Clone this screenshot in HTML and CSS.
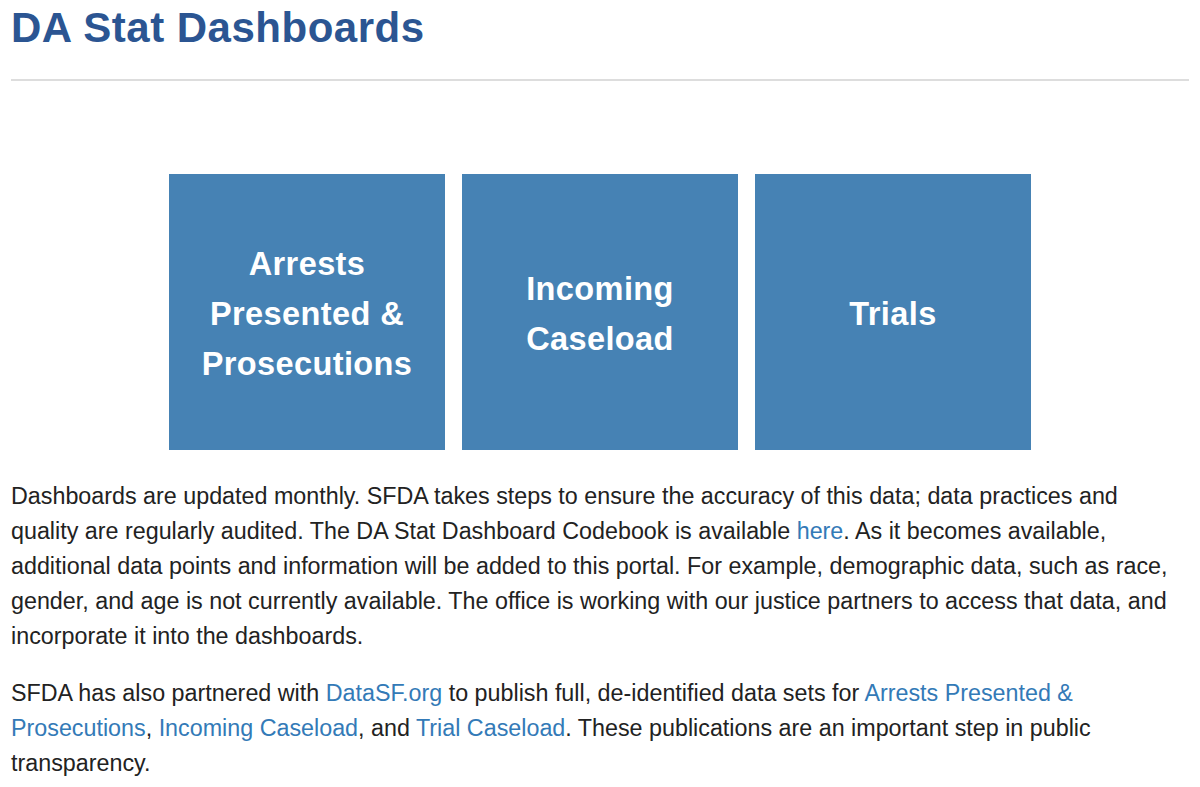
FILE: index.html
```html
<!DOCTYPE html>
<html lang="en">
<head>
<meta charset="utf-8">
<title>DA Stat Dashboards</title>
<link rel="stylesheet" href="styles.css">
</head>
<body>
<main class="page">
  <h1 class="title">DA Stat Dashboards</h1>
  <hr class="rule">
  <div class="tiles">
    <a class="tile" href="#">Arrests<br>Presented &amp;<br>Prosecutions</a>
    <a class="tile" href="#">Incoming<br>Caseload</a>
    <a class="tile" href="#">Trials</a>
  </div>
  <p class="text">Dashboards are updated monthly. SFDA takes steps to ensure the accuracy of this data; data practices and quality are regularly audited. The DA Stat Dashboard Codebook is available <a href="#">here</a>. As it becomes available, additional data points and information will be added to this portal. For example, demographic data, such as race, gender, and age is not currently available. The office is working with our justice partners to access that data, and incorporate it into the dashboards.</p>
  <p class="text">SFDA has also partnered with <a href="#">DataSF.org</a> to publish full, de-identified data sets for <a href="#">Arrests Presented &amp; Prosecutions</a>, <a href="#">Incoming Caseload</a>, and <a href="#">Trial Caseload</a>. These publications are an important step in public transparency.</p>
</main>
</body>
</html>
```
FILE: styles.css
```css
html, body {
  margin: 0;
  padding: 0;
  background: #fff;
}
body {
  font-family: "Liberation Sans", Arial, sans-serif;
  color: #222;
}
.page {
  padding: 0 11px;
}
.title {
  margin: 0;
  padding-top: 5px;
  font-size: 42px;
  line-height: 46px;
  font-weight: bold;
  letter-spacing: 0.5px;
  color: #2b5592;
}
.rule {
  margin: 28px 0 0;
  border: 0;
  border-top: 2px solid #dddddd;
  height: 0;
}
.tiles {
  display: flex;
  justify-content: center;
  gap: 17px;
  margin-top: 93px;
}
.tile {
  box-sizing: border-box;
  width: 276px;
  height: 276px;
  padding-top: 3px;
  background: #4682b4;
  color: #fff;
  text-decoration: none;
  display: flex;
  align-items: center;
  justify-content: center;
  text-align: center;
  font-weight: bold;
  font-size: 32.5px;
  line-height: 50px;
  letter-spacing: 0.4px;
}
.text {
  margin: 29px 0 0;
  font-size: 23.3px;
  line-height: 35px;
}
.text + .text {
  margin-top: 22px;
}
.text a {
  color: #337ab7;
  text-decoration: none;
}
```
